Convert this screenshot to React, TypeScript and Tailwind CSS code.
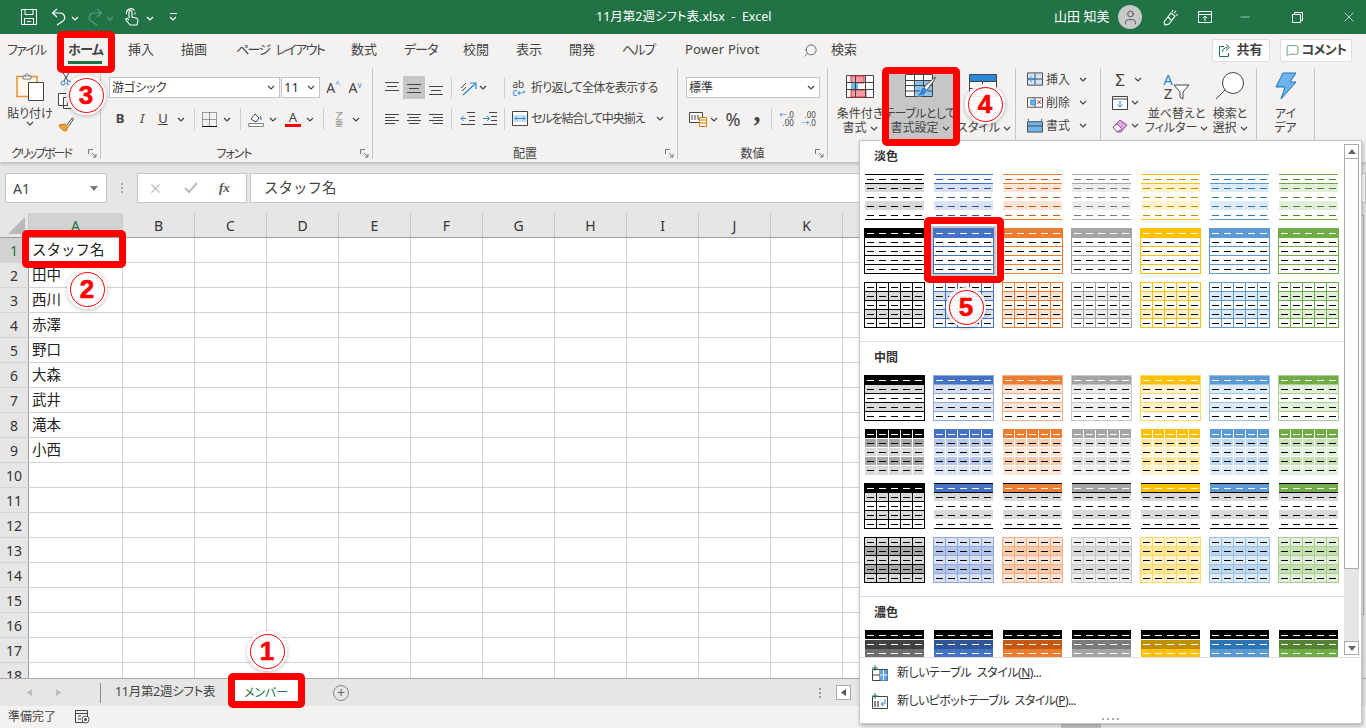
import React from 'react';
import { Search, User, MessageSquare, Minus, X } from 'lucide-react';

const Chev = ({ color = '#444' }: { color?: string }) => (
  <svg width="8" height="5" viewBox="0 0 8 5" className="inline-block shrink-0">
    <path d="M1 1l3 3 3-3" fill="none" stroke={color} strokeWidth="1.2" />
  </svg>
);

const Sep = ({ className }: { className: string }) => <div className={`h-[22px] w-px shrink-0 bg-[#d2d0ce] ${className}`} />;

const Launcher = () => (
  <svg width="9" height="9" viewBox="0 0 9 9" className="absolute right-[3px] bottom-[1px]">
    <path d="M.5 5V.5H5M4 4l4 4M8 5v3H5" fill="none" stroke="#777" strokeWidth="1" />
  </svg>
);

const Group = ({ className, label, launcher, children }: { className: string; label?: React.ReactNode; launcher?: boolean; children: React.ReactNode }) => (
  <div className={`mt-[2px] flex h-[91px] shrink-0 flex-col border-r border-[#c8c6c4] ${className}`}>
    <div className="min-h-0 flex-1">{children}</div>
    <div className="relative flex h-[12px] items-center justify-center pt-[2px] text-[12px] leading-none text-[#444]">
      {label}
      {launcher && <Launcher />}
    </div>
  </div>
);

const Slot = ({ className, children }: { className: string; children?: React.ReactNode }) => (
  <div className={`flex h-full shrink-0 items-center justify-center ${className}`}>{children}</div>
);

const Lines = ({ rows }: { rows: number[][] }) => (
  <svg width="16" height="16" viewBox="0 0 16 16">
    {rows.map(([x1, x2, y]) => (
      <path key={`${x1}${y}`} d={`M${x1} ${y + 0.5}H${x2}`} stroke="#444" />
    ))}
  </svg>
);

const BigBtn = ({ className, icon, l1, l2, chev }: { className: string; icon: React.ReactNode; l1: React.ReactNode; l2: string; chev?: boolean }) => (
  <div className={`flex h-[72px] shrink-0 flex-col items-center pt-[4px] text-[12px] leading-[14px] whitespace-nowrap text-[#444] ${className}`}>
    <div className="flex h-[28px] items-center justify-center">{icon}</div>
    <div className="mt-[7px]">{l1}</div>
    <div className="flex items-center gap-[3px]">
      {l2}
      {chev && <Chev />}
    </div>
  </div>
);

const TitleBar = () => (
  <div className="flex h-[34px] shrink-0 items-center bg-[#217346] text-white">
    <svg width="16" height="16" viewBox="0 0 16 16" className="ml-[21px]">
      <path d="M.5.5h15v15H.5zM4 .5v5h8v-5M3.500 15.500v-6h9v6M6 12.500h4" fill="none" stroke="#fff" />
    </svg>
    <svg width="15" height="18" viewBox="0 0 15 18" className="ml-[14px]">
      <path d="M6 1L1.500 5 6 9M1.500 5H9a4.500 4.500 0 0 1 3 8l-6 4" fill="none" stroke="#fff" strokeWidth="1.2" />
    </svg>
    <div className="ml-[5px]"><Chev color="#fff" /></div>
    <svg width="15" height="18" viewBox="0 0 15 18" className="ml-[9px]">
      <path d="M9 1l4.500 4L9 9M13.500 5H6a4.500 4.500 0 0 0-3 8l6 4" fill="none" stroke="#5f9c7e" strokeWidth="1.2" />
    </svg>
    <div className="ml-[3px]"><Chev color="#5f9c7e" /></div>
    <svg width="15" height="18" viewBox="0 0 15 18" className="ml-[10px]">
      <path d="M5 10V4a1.500 1.500 0 0 1 3 0v5l4 1c1.500.4 2 1 2 2.500L13 17H6l-4-5c-.6-1 .6-2.200 1.800-1.200L5 12M2.500 6a4.500 4.500 0 0 1 8 -3.500M11 6.500a4.500 4.500 0 0 0 0-2" fill="none" stroke="#fff" strokeWidth="1.1" />
    </svg>
    <div className="ml-[7px]"><Chev color="#fff" /></div>
    <div className="ml-[15px] flex flex-col items-center gap-[2px]">
      <div className="h-px w-[7px] bg-white" />
      <Chev color="#fff" />
    </div>
    <div className="ml-[419px] w-[176px] text-[12.500px] whitespace-nowrap">11月第2週シフト表.xlsx &nbsp;-&nbsp; Excel</div>
    <div className="ml-[282px] w-[54px] text-[13px] whitespace-nowrap">山田 知美</div>
    <div className="ml-[10px] flex h-[24px] w-[24px] items-center justify-center rounded-full bg-[#c8c8c8]">
      <User size={17} strokeWidth={1.2} className="text-[#444]" />
    </div>
    <svg width="16" height="17" viewBox="0 0 16 17" className="ml-[21px]">
      <path d="M1 13l7-9 4 3-6 8-4 1zM5 8l3 3M10 1l-1 2M13 2l-2 2M15 6h-2" fill="none" stroke="#fff" strokeWidth="1.1" />
    </svg>
    <svg width="14" height="12" viewBox="0 0 14 12" className="ml-[19px]">
      <path d="M.5.500h13v11H.5zM.5 3.500h13M7 10V5M5 7l2-2 2 2" fill="none" stroke="#fff" />
    </svg>
    <Minus size={14} strokeWidth={1} className="ml-[26px]" />
    <svg width="11" height="11" viewBox="0 0 11 11" className="ml-[40px]">
      <path d="M.5 2.500h8v8h-8zM2.500 2.500v-2h8v8h-2" fill="none" stroke="#fff" />
    </svg>
    <X size={16} strokeWidth={1} className="ml-[38px]" />
  </div>
);

const tabs = [
  ['ファイル', 'w-[38px] tracking-[-1.6px]'],
  ['ホーム', 'ml-[23px] w-[34px] tracking-[-0.6px] font-bold'],
  ['挿入', 'ml-[26px] w-[26px]'],
  ['描画', 'ml-[27px] w-[26px]'],
  ['ページ レイアウト', 'ml-[29px] w-[86px] tracking-[-1.6px] [word-spacing:4px]'],
  ['数式', 'ml-[29px] w-[26px]'],
  ['データ', 'ml-[27px] w-[32px] tracking-[-1px]'],
  ['校閲', 'ml-[27px] w-[26px]'],
  ['表示', 'ml-[27px] w-[26px]'],
  ['開発', 'ml-[27px] w-[26px]'],
  ['ヘルプ', 'ml-[27px] w-[32px] tracking-[-1.5px]'],
];

const TabRow = () => (
  <div className="flex h-[32px] shrink-0 items-center bg-[#f3f2f1] pl-[7px] text-[13px] whitespace-nowrap text-[#444]">
    {tabs.map(([t, cls]) => (
      <div key={t} className={`flex h-[28px] shrink-0 items-center border-b-[3px] pt-[3px] ${t === 'ホーム' ? 'border-[#217346]' : 'border-transparent'} ${cls}`}>
        {t}
      </div>
    ))}
    <div className="ml-[31px] w-[75px] tracking-[0.2px]">Power Pivot</div>
    <Search size={15} strokeWidth={1.2} className="ml-[43px] shrink-0 -scale-x-100" />
    <div className="ml-[13px] w-[26px]">検索</div>
    <div className="ml-[355px] flex h-[23px] w-[58px] shrink-0 items-center justify-center gap-[5px] rounded-[2px] border border-[#e1dfdd] bg-white font-bold">
      <svg width="12" height="13" viewBox="0 0 12 13">
        <path d="M5 2.500H.5v10h9V9M3.500 8c0-3 2-4.500 5-4.500M7 .5l3.500 3L7 6.500" fill="none" stroke="#217346" />
      </svg>
      共有
    </div>
    <div className="ml-[10px] flex h-[23px] w-[72px] shrink-0 items-center justify-center gap-[3px] rounded-[2px] border border-[#e1dfdd] bg-white font-bold tracking-[-0.6px]">
      <MessageSquare size={13} strokeWidth={1.2} className="text-[#217346]" />
      コメント
    </div>
  </div>
);

const Combo = ({ className, text, textClass }: { className: string; text: string; textClass?: string }) => (
  <div className={`flex h-[21px] shrink-0 items-center justify-between border border-[#c6c6c6] bg-white pr-[4px] pl-[2px] text-[#333] ${className} ${textClass ?? ''}`}>
    <span>{text}</span>
    <Chev />
  </div>
);

const ClipboardGroup = () => (
  <Group className="w-[101px]" label={<span className="-ml-[18px] tracking-[-2px]">クリップボード</span>} launcher>
    <div className="flex h-full">
      <BigBtn
        className="w-[58px] pl-[2px]"
        l1="貼り付け"
        l2=""
        chev
        icon={
          <svg width="28" height="29" viewBox="0 0 28 29">
            <path d="M1 4.500h20v20H1z" fill="#fff8ee" stroke="#e8912d" strokeWidth="1.500" />
            <path d="M7 4h8v3H7zM9 4c0-3 4-3 4 0" fill="#fff" stroke="#777" />
            <path d="M12.500 10.500h15v18h-15z" fill="#fff" stroke="#444" />
          </svg>
        }
      />
      <div className="flex flex-col items-center gap-[7px] pt-[2px]">
        <svg width="14" height="16" viewBox="0 0 14 16">
          <path d="M3 1l6 10M11 1L5 11" stroke="#444" fill="none" />
          <circle cx="4" cy="13" r="2" fill="none" stroke="#2b88d8" />
          <circle cx="10" cy="13" r="2" fill="none" stroke="#2b88d8" />
        </svg>
        <svg width="16" height="16" viewBox="0 0 16 16">
          <path d="M.5.500h9v12h-9zM5.500 4.500h9v11h-9z" fill="#fff" stroke="#444" />
        </svg>
        <svg width="16" height="16" viewBox="0 0 16 16">
          <path d="M1 9l6-1 3 3-2 4c-3 0-6-3-7-6z" fill="#f2a33a" stroke="#c9720f" />
          <path d="M9 9l5-7 1.500 1-5 7.500" fill="#fff" stroke="#444" />
        </svg>
      </div>
    </div>
  </Group>
);

const FontGroup = () => (
  <Group className="w-[272px]" label={<span className="-ml-[5px] tracking-[-1px]">フォント</span>} launcher>
    <div className="flex flex-col pt-[9px] pl-[8px]">
      <div className="flex h-[21px] items-center text-[12px]">
        <Combo className="w-[171px]" text="游ゴシック" />
        <Combo className="ml-px w-[39px]" text="11" textClass="text-[13px]" />
        <Slot className="ml-[2px] w-[22px] text-[14px] text-[#444]">A<span className="-mt-[8px] text-[8px] text-[#2b88d8]">^</span></Slot>
        <Slot className="w-[22px] text-[14px] text-[#444]">A<span className="-mt-[6px] text-[8px] text-[#2b88d8]">v</span></Slot>
      </div>
      <div className="mt-[10px] flex h-[22px] items-center text-[#444]">
        <Slot className="w-[22px] text-[13px] font-bold">B</Slot>
        <Slot className="w-[22px] text-[13px] italic">I</Slot>
        <Slot className="w-[20px] text-[13px] underline">U</Slot>
        <Slot className="w-[16px]"><Chev /></Slot>
        <Sep className="ml-[5px]" />
        <Slot className="ml-[3px] w-[22px]">
          <svg width="15" height="15" viewBox="0 0 15 15">
            <path d="M.5.500h14v14H.5zM.5 7.500h14M7.500.500v14" fill="none" stroke="#444" strokeDasharray="1 1" />
            <path d="M0 14.500h15" stroke="#111" />
          </svg>
        </Slot>
        <Slot className="w-[14px]"><Chev /></Slot>
        <Sep className="ml-[6px]" />
        <Slot className="ml-[6px] w-[18px]">
          <svg width="16" height="16" viewBox="0 0 16 16">
            <path d="M3 8l4-5 4 4-3 4z" fill="#fff" stroke="#444" />
            <path d="M12 5c2 1 2 4 1 4s-1-2-1-4z" fill="#2b88d8" />
            <path d="M.5 12.500h15v3H.5z" fill="#fff" stroke="#888" />
          </svg>
        </Slot>
        <Slot className="w-[16px]"><Chev /></Slot>
        <Slot className="w-[24px]">
          <div className="flex flex-col items-center text-[13px] leading-[13px]">
            A
            <div className="h-[3px] w-[16px] bg-[#ff0000]" />
          </div>
        </Slot>
        <Slot className="w-[10px]"><Chev /></Slot>
        <Sep className="ml-[8px]" />
        <Slot className="ml-[6px] w-[18px] text-[8px] leading-[8px] text-[#777]">
          <div className="flex flex-col items-center">ア<span>亜</span></div>
        </Slot>
        <Slot className="w-[16px]"><Chev /></Slot>
      </div>
    </div>
  </Group>
);

const AlignGroup = () => (
  <Group className="w-[305px]" label="配置" launcher>
    <div className="flex flex-col pt-[8px] pl-[8px] text-[12px] whitespace-nowrap text-[#444]">
      <div className="flex h-[23px] items-center">
        <Slot className="w-[22px]"><Lines rows={[[1, 15, 2], [3, 13, 6], [1, 15, 10]]} /></Slot>
        <Slot className="w-[22px] bg-[#c8c6c4]"><Lines rows={[[1, 15, 4], [3, 13, 8], [1, 15, 12]]} /></Slot>
        <Slot className="w-[22px]"><Lines rows={[[1, 15, 6], [3, 13, 10], [1, 15, 14]]} /></Slot>
        <Sep className="ml-[4px]" />
        <Slot className="ml-[6px] w-[20px]">
          <svg width="17" height="16" viewBox="0 0 17 16" className="overflow-visible">
            <path d="M3 15L15 4M10 3h6v6" fill="none" stroke="#2b88d8" strokeWidth="1.200" />
            <path d="M1 8l5-5M2 11l4-4" fill="none" stroke="#444" />
          </svg>
        </Slot>
        <Slot className="w-[10px]"><Chev /></Slot>
        <Sep className="ml-[16px]" />
        <Slot className="ml-[6px] w-[18px]">
          <div className="relative flex w-[15px] flex-col text-[10px] leading-[8px]">
            <span>ab</span>
            <span className="text-[#2b88d8]">c↩</span>
          </div>
        </Slot>
        <div className="ml-[2px] tracking-[-0.75px]">折り返して全体を表示する</div>
      </div>
      <div className="mt-[8px] flex h-[23px] items-center">
        <Slot className="w-[22px]"><Lines rows={[[1, 15, 3], [1, 11, 6], [1, 15, 9], [1, 11, 12]]} /></Slot>
        <Slot className="w-[22px]"><Lines rows={[[1, 15, 3], [3, 13, 6], [1, 15, 9], [3, 13, 12]]} /></Slot>
        <Slot className="w-[22px]"><Lines rows={[[1, 15, 3], [5, 15, 6], [1, 15, 9], [5, 15, 12]]} /></Slot>
        <Sep className="ml-[4px]" />
        <Slot className="ml-[4px] w-[22px]">
          <svg width="15" height="13" viewBox="0 0 15 13">
            <path d="M7 .5h8M9 4.500h6M9 8.500h6M1 12.500h14" stroke="#444" fill="none" />
            <path d="M6 6.500H1M3.500 4l-2.500 2.500L3.500 9" stroke="#2b88d8" fill="none" />
          </svg>
        </Slot>
        <Slot className="w-[22px]">
          <svg width="15" height="13" viewBox="0 0 15 13">
            <path d="M7 .5h8M9 4.500h6M9 8.500h6M1 12.500h14" stroke="#444" fill="none" />
            <path d="M1 6.500h6M5 4l2.500 2.500L5 9" stroke="#2b88d8" fill="none" />
          </svg>
        </Slot>
        <Sep className="ml-[4px]" />
        <Slot className="ml-[6px] w-[18px]">
          <svg width="16" height="15" viewBox="0 0 16 15">
            <path d="M.5.500h15v14H.5z" fill="#fff" stroke="#444" />
            <path d="M1 4h14v7H1z" fill="#cfe4f7" />
            <path d="M3 7.500h10M5 5.500l-2 2 2 2M11 5.500l2 2-2 2" fill="none" stroke="#2b88d8" />
          </svg>
        </Slot>
        <div className="ml-[2px] w-[125px] tracking-[-1.1px]">セルを結合して中央揃え</div>
        <Chev />
      </div>
    </div>
  </Group>
);

const NumberGroup = () => (
  <Group className="w-[150px]" label="数値" launcher>
    <div className="flex flex-col pt-[9px] pl-[8px] text-[#444]">
      <Combo className="w-[134px] text-[12px]" text="標準" />
      <div className="mt-[10px] flex h-[22px] items-center">
        <Slot className="w-[24px]">
          <svg width="18" height="16" viewBox="0 0 18 16">
            <path d="M.5 1.500h13v10H.5z" fill="#fff" stroke="#444" />
            <path d="M3 4v5M6 4v5M9 4v5" stroke="#444" />
            <path d="M10.500 6.500h7v9h-7z" fill="#fff" stroke="#e07b00" />
            <path d="M11 9h6M11 12h6" stroke="#e07b00" />
          </svg>
        </Slot>
        <Slot className="w-[8px]"><Chev /></Slot>
        <Slot className="ml-[5px] w-[20px] text-[18px]">%</Slot>
        <Slot className="w-[28px] pb-[14px] font-['Liberation_Serif',serif] text-[28px] font-bold">,</Slot>
        <Sep />
        <Slot className="ml-[7px] w-[15px] text-[8px] leading-[8px]">
          <div className="flex flex-col items-end">
            <span><span className="text-[#2b88d8]">←</span>.0</span>
            <span>.00</span>
          </div>
        </Slot>
        <Slot className="ml-[7px] w-[15px] text-[8px] leading-[8px]">
          <div className="flex flex-col items-end">
            <span>.00</span>
            <span><span className="text-[#2b88d8]">→</span>.0</span>
          </div>
        </Slot>
      </div>
    </div>
  </Group>
);

const StylesGroup = () => (
  <Group className="w-[188px]">
    <div className="flex pl-[6px]">
      <BigBtn
        className="w-[52px]"
        l1="条件付き"
        l2="書式"
        chev
        icon={
          <svg width="28" height="23" viewBox="0 0 28 23">
            <path d="M.5.500h27v22H.5z" fill="#fff" stroke="#444" />
            <path d="M5 1h13v7H5zM5 15h15v7H5z" fill="#f79ca5" stroke="#d13438" />
            <path d="M5 8h7v7H5z" fill="#6db5ea" />
            <path d="M.5 7.500h27M.5 14.500h27M9.500 1v21M19.500 1v21" fill="none" stroke="#444" />
          </svg>
        }
      />
      <BigBtn
        className="w-[68px] bg-[#c6c6c6]"
        l1={<span className="tracking-[-0.5px]">テーブルとして</span>}
        l2="書式設定"
        chev
        icon={
          <svg width="31" height="25" viewBox="0 0 31 25">
            <path d="M.5.500h27v22H.5z" fill="#fff" stroke="#444" />
            <path d="M9 1h18v5H9z" fill="#fff" />
            <path d="M9 7h18v15H9z" fill="#8cc0ec" />
            <path d="M.5 6.500h27M.5 11.500h27M.5 17h27M9.500 1v21M18.500 1v21" fill="none" stroke="#444" />
            <path d="M30 3L19 13l3 3 8-11z" fill="#fff" stroke="#444" />
            <path d="M19 13c-3 0-3 3-4 5s-3 3-5 3c4 2 9 1 11-2 1-1 1-3 1-3z" fill="#2b88d8" stroke="#fff" strokeWidth="0.5" />
          </svg>
        }
      />
      <BigBtn
        className="w-[60px]"
        l1="セルの"
        l2="スタイル"
        chev
        icon={
          <svg width="31" height="25" viewBox="0 0 31 25">
            <path d="M.5.500h27v22H.5z" fill="#fff" stroke="#444" />
            <path d="M1 1h26v6H1z" fill="#2b88d8" />
            <path d="M.5 7.500h27M.5 14.500h27M13.500 7v15" fill="none" stroke="#444" />
          </svg>
        }
      />
    </div>
  </Group>
);

const cellRows = [
  ['挿入', 'M.5.500h16v13H.5zM.5 7h16M8.500 1v12', '#cfe4f7', 'ins'],
  ['削除', 'M.5 2.500h16v10H.5zM8.500 3v9', '#fff', 'del'],
  ['書式', 'M1.500.500v2M15.500.500v2M.5 3.500h16v11H.5zM.5 8h16', '#6db5ea', 'fmt'],
];

const CellsGroup = () => (
  <Group className="w-[85px]">
    <div className="flex flex-col pl-[11px] text-[12px] text-[#444]">
      {cellRows.map(([t, d, fill, k]) => (
        <div key={k} className="flex h-[23px] items-center">
          <svg width="16" height="15" viewBox="0 0 17 15" className="shrink-0">
            <path d={d} fill={fill} stroke="#444" />
            {k === 'ins' && <path d="M10 7H2M5 4L2 7l3 3" fill="none" stroke="#2b88d8" />}
            {k === 'del' && <path d="M11 5l4 4M15 5l-4 4" fill="none" stroke="#e81123" />}
            {k === 'del' && <path d="M4 5h5v5H4z" fill="#6db5ea" stroke="#2b88d8" />}
          </svg>
          <div className="ml-[3px] w-[33px]">{t}</div>
          <Chev />
        </div>
      ))}
    </div>
  </Group>
);

const EditGroup = () => (
  <Group className="w-[156px]">
    <div className="flex">
      <div className="ml-[11px] flex w-[33px] shrink-0 flex-col">
        <div className="flex h-[23px] items-center gap-[6px]">
          <div className="flex w-[16px] justify-center text-[17px] leading-none text-[#444]">Σ</div>
          <Chev />
        </div>
        <div className="flex h-[23px] items-center gap-[3px]">
          <svg width="16" height="14" viewBox="0 0 16 14" className="shrink-0">
            <path d="M.5.500h15v13H.5zM.5 3h15" fill="#fff" stroke="#444" />
            <path d="M8 5v6M5.500 8.500L8 11l2.500-2.500" fill="none" stroke="#2b88d8" />
          </svg>
          <Chev />
        </div>
        <div className="flex h-[23px] items-center gap-[3px]">
          <svg width="16" height="14" viewBox="0 0 16 14" className="shrink-0">
            <path d="M1 8l7-7 7 5-6 7H5z" fill="#d9a6dd" stroke="#9b4f96" />
            <path d="M5 13l-4-5 4-3 5 5z" fill="#fff" stroke="#9b4f96" />
          </svg>
          <Chev />
        </div>
      </div>
      <BigBtn
        className="w-[63px]"
        l1="並べ替えと"
        l2="フィルター"
        chev
        icon={
          <div className="flex items-end">
            <div className="flex flex-col items-center text-[15px] leading-[14px]">
              <span className="text-[#2b88d8]">A</span>
              <span>Z</span>
            </div>
            <svg width="17" height="16" viewBox="0 0 17 16">
              <path d="M1 1h15l-6 7v7l-3-2V8z" fill="#fff" stroke="#444" />
            </svg>
          </div>
        }
      />
      <BigBtn
        className="w-[44px]"
        l1="検索と"
        l2="選択"
        chev
        icon={
          <svg width="30" height="28" viewBox="0 0 30 28">
            <circle cx="18" cy="11" r="10.500" fill="#fff" stroke="#444" />
            <path d="M10 18L1 27" stroke="#444" />
          </svg>
        }
      />
    </div>
  </Group>
);

const IdeasGroup = () => (
  <Group className="w-[58px]">
    <BigBtn
      className="w-full"
      l1="アイ"
      l2="デア"
      icon={
        <svg width="22" height="28" viewBox="0 0 22 28">
          <path d="M8 1h13l-6 9h6L6 27l4-12H1z" fill="#6db5ea" stroke="#1b6ec2" />
        </svg>
      }
    />
  </Group>
);

const Ribbon = () => (
  <div className="relative z-10 flex h-[96px] shrink-0 items-start bg-[#f3f2f1] shadow-[0_2px_3px_rgba(0,0,0,0.18)]">
    <ClipboardGroup />
    <FontGroup />
    <AlignGroup />
    <NumberGroup />
    <StylesGroup />
    <CellsGroup />
    <EditGroup />
    <IdeasGroup />
  </div>
);

const FormulaBar = () => (
  <div className="flex h-[51px] shrink-0 items-start bg-[#e6e6e6] pt-[11px] pl-[5px]">
    <div className="flex h-[30px] w-[102px] items-center justify-between border border-[#c6c6c6] bg-white pr-[8px] pl-[7px] text-[14px] text-[#444]">
      A1
      <svg width="8" height="5" viewBox="0 0 8 5"><path d="M0 0h8L4 5z" fill="#777" /></svg>
    </div>
    <div className="ml-[14px] flex h-[30px] flex-col items-center justify-center gap-[2px]">
      <div className="h-[2px] w-[2px] bg-[#aaa]" />
      <div className="h-[2px] w-[2px] bg-[#aaa]" />
      <div className="h-[2px] w-[2px] bg-[#aaa]" />
    </div>
    <div className="ml-[14px] flex h-[30px] w-[110px] items-center border border-[#c6c6c6] bg-white">
      <X size={15} strokeWidth={1.8} className="ml-[10px] text-[#bbb]" />
      <svg width="14" height="12" viewBox="0 0 14 12" className="ml-[21px]">
        <path d="M1 6l4 4 8-9" fill="none" stroke="#bbb" strokeWidth="2" />
      </svg>
      <div className="ml-[21px] font-['Liberation_Serif',serif] text-[13px] font-bold text-[#555] italic">fx</div>
    </div>
    <div className="ml-[3px] flex h-[30px] flex-1 items-center border border-[#c6c6c6] bg-white pl-[13px] text-[14.500px] text-[#444] [font-feature-settings:normal]">スタッフ名</div>
  </div>
);

const columns = ['A', 'B', 'C', 'D', 'E', 'F', 'G', 'H', 'I', 'J', 'K', 'L', 'M', 'N', 'O', 'P'];
const names = ['スタッフ名', '田中', '西川', '赤澤', '野口', '大森', '武井', '滝本', '小西'];
const rowNums = Array.from({ length: 18 }, (_, i) => i + 1);

const Sheet = () => (
  <div className="flex min-h-0 flex-1 overflow-hidden">
    <div className="min-w-0 flex-1 overflow-hidden">
      <div className="flex h-[25px] border-b border-[#9e9e9e] bg-[#e6e6e6]">
        <div className="flex w-[29px] shrink-0 items-end justify-end border-r border-[#c8c8c8] pr-[3px] pb-[3px]">
          <svg width="17" height="17" viewBox="0 0 17 17"><path d="M17 0v17H0z" fill="#b9b9b9" /></svg>
        </div>
        {columns.map((c, i) => (
          <div key={c} className={`flex shrink-0 items-center justify-center border-r border-[#c8c8c8] text-[14px] ${i === 0 ? 'w-[94px] bg-[#d2d2d2] text-[#217346]' : 'w-[72px] text-[#333]'}`}>
            {c}
          </div>
        ))}
      </div>
      {rowNums.map((r) => (
        <div key={r} className="flex h-[25px] border-b border-[#d4d4d4]">
          <div className={`flex w-[29px] shrink-0 items-center justify-center border-r border-[#9e9e9e] text-[14px] ${r === 1 ? 'bg-[#d2d2d2] text-[#217346]' : 'bg-[#e6e6e6] text-[#333]'}`}>{r}</div>
          {columns.map((c, i) => (
            <div key={c} className={`flex shrink-0 items-center overflow-hidden border-r border-[#d4d4d4] pl-[3px] text-[14.500px] whitespace-nowrap text-[#222] [font-feature-settings:normal] ${i === 0 ? 'w-[94px]' : 'w-[72px]'}`}>
              {i === 0 ? names[r - 1] : ''}
            </div>
          ))}
        </div>
      ))}
    </div>
    <div className="flex w-[18px] shrink-0 flex-col items-center bg-[#e6e6e6] pt-[2px]">
      <div className="h-[400px] w-[14px] border border-[#ababab] bg-[#f5f5f5]" />
    </div>
  </div>
);

const SheetBar = () => (
  <div className="flex h-[28px] shrink-0 items-center border-t border-[#ababab] bg-[#e6e6e6] text-[13px] text-[#444]">
    <svg width="5" height="7" viewBox="0 0 5 7" className="ml-[27px]"><path d="M5 0v7L0 3.500z" fill="#bbb" /></svg>
    <svg width="5" height="7" viewBox="0 0 5 7" className="ml-[24px]"><path d="M0 0v7l5-3.500z" fill="#bbb" /></svg>
    <div className="ml-[39px] h-[20px] w-px bg-[#8a8a8a]" />
    <div className="ml-[14px] w-[104px] text-[12.500px] tracking-[-0.3px] whitespace-nowrap">11月第2週シフト表</div>
    <div className="ml-[15px] flex h-full w-[64px] items-center justify-center bg-white text-[12px] text-[#217346]">メンバー</div>
    <div className="ml-[35px] flex h-[16px] w-[16px] items-center justify-center rounded-full border border-[#888] text-[14px] leading-none text-[#666]">+</div>
    <div className="ml-[470px] flex flex-col gap-[2px]">
      <div className="h-[2px] w-[2px] bg-[#999]" />
      <div className="h-[2px] w-[2px] bg-[#999]" />
      <div className="h-[2px] w-[2px] bg-[#999]" />
    </div>
    <div className="ml-[15px] flex h-[15px] w-[15px] items-center justify-center border border-[#ababab] bg-white">
      <svg width="5" height="7" viewBox="0 0 5 7"><path d="M5 0v7L0 3.500z" fill="#555" /></svg>
    </div>
  </div>
);

const StatusBar = () => (
  <div className="flex h-[22px] shrink-0 items-center bg-[#f3f2f1] pl-[8px] text-[12px] text-[#444]">
    <div className="w-[48px]">準備完了</div>
    <svg width="15" height="14" viewBox="0 0 15 14" className="ml-[19px]">
      <path d="M.5.500h12v12H.5zM.5 3.500h12M3 6h3M3 9h3" fill="none" stroke="#444" />
      <circle cx="10.500" cy="9.500" r="3.500" fill="#fff" stroke="#444" />
      <circle cx="10.500" cy="9.500" r="1.500" fill="#444" />
    </svg>
    <div className="ml-[971px] h-full w-[40px] bg-[#c8c8c8]" />
  </div>
);

type Row = { bg: string; dash: string; top: string };
type ThumbSpec = { rows: Row[]; v: string; side: string; bottom: string };

const NONE = 'transparent';
const WHITE = '#ffffff';
const BLACK = '#000000';

const themes = [
  { c: '#000000', dash: '#000000', t1: '#d9d9d9', t2: '#a6a6a6', soft: '#000000', d1: '#404040', d2: '#6e6e6e' },
  { c: '#4472c4', dash: '#2f5597', t1: '#d9e1f2', t2: '#b4c6e7', soft: '#8ea9db', d1: '#2f5597', d2: '#4472c4' },
  { c: '#ed7d31', dash: '#c65911', t1: '#fce4d6', t2: '#f8cbad', soft: '#f4b084', d1: '#c65911', d2: '#ed7d31' },
  { c: '#a5a5a5', dash: '#7b7b7b', t1: '#ededed', t2: '#dbdbdb', soft: '#c9c9c9', d1: '#7b7b7b', d2: '#a5a5a5' },
  { c: '#ffc000', dash: '#bf8f00', t1: '#fff2cc', t2: '#ffe699', soft: '#ffd966', d1: '#bf8f00', d2: '#ffc000' },
  { c: '#5b9bd5', dash: '#2e75b6', t1: '#ddebf7', t2: '#bdd7ee', soft: '#9bc2e6', d1: '#2e75b6', d2: '#5b9bd5' },
  { c: '#70ad47', dash: '#548235', t1: '#e2efda', t2: '#c6e0b4', soft: '#a9d08e', d1: '#548235', d2: '#70ad47' },
];
type Theme = (typeof themes)[number];

const band = (a: string, b: string, dash: string, top: string) =>
  [a, b, a, b].map((bg) => ({ bg, dash, top }));

const lightStripe = (t: Theme): ThumbSpec => {
  const rows = band(t.t1, WHITE, t.dash, NONE);
  rows[0].top = t.c;
  return { rows: [{ bg: WHITE, dash: t.dash, top: t.c }, ...rows], v: NONE, side: NONE, bottom: t.c };
};
const lightLines = (t: Theme): ThumbSpec => ({
  rows: [{ bg: t.c, dash: WHITE, top: t.c }, ...band(WHITE, WHITE, BLACK, t.c)],
  v: NONE,
  side: t.c,
  bottom: t.c,
});
const lightGrid = (t: Theme): ThumbSpec => ({
  rows: [{ bg: WHITE, dash: BLACK, top: t.c }, ...band(t.t1, WHITE, BLACK, t.c)],
  v: t.c,
  side: t.c,
  bottom: t.c,
});
const medLines = (t: Theme): ThumbSpec => ({
  rows: [{ bg: t.c, dash: WHITE, top: t.soft }, ...band(t.t1, WHITE, BLACK, t.soft)],
  v: NONE,
  side: t.soft,
  bottom: t.soft,
});
const medGaps = (t: Theme): ThumbSpec => ({
  rows: [{ bg: t.c, dash: WHITE, top: t.c }, ...band(t.t2, t.t1, BLACK, WHITE)],
  v: WHITE,
  side: NONE,
  bottom: t.t1,
});
const medRules = (t: Theme, i: number): ThumbSpec =>
  i === 0
    ? { rows: [{ bg: BLACK, dash: WHITE, top: BLACK }, ...band('#d9d9d9', WHITE, BLACK, BLACK)], v: BLACK, side: BLACK, bottom: BLACK }
    : {
        rows: [
          { bg: t.c, dash: WHITE, top: BLACK },
          { bg: '#d9d9d9', dash: BLACK, top: BLACK },
          { bg: WHITE, dash: BLACK, top: NONE },
          { bg: '#d9d9d9', dash: BLACK, top: NONE },
          { bg: WHITE, dash: BLACK, top: NONE },
        ],
        v: NONE,
        side: NONE,
        bottom: BLACK,
      };
const medGrid = (t: Theme): ThumbSpec => ({
  rows: [{ bg: t.t1, dash: BLACK, top: t.soft }, ...band(t.t2, t.t1, BLACK, t.soft)],
  v: t.soft,
  side: t.soft,
  bottom: t.soft,
});
const darkBands = (t: Theme): ThumbSpec => ({
  rows: [
    { bg: BLACK, dash: WHITE, top: BLACK },
    { bg: t.d1, dash: WHITE, top: WHITE },
    { bg: t.d2, dash: WHITE, top: t.d1 },
    { bg: t.d1, dash: WHITE, top: t.d1 },
    { bg: t.d2, dash: WHITE, top: t.d1 },
  ],
  v: NONE,
  side: NONE,
  bottom: t.d2,
});

const Thumb = ({ spec, selected }: { spec: ThumbSpec; selected?: boolean }) => (
  <div className={selected ? 'outline-[2px] outline-[#c6c6c6]' : ''}>
    <div className="flex h-[46px] w-[61px] flex-col border-x" style={{ borderColor: spec.side }}>
      {spec.rows.map((r, ri) => (
        <div key={ri} className="flex h-[9px] shrink-0 border-t" style={{ backgroundColor: r.bg, borderTopColor: r.top }}>
          {[0, 1, 2, 3, 4].map((c) => (
            <div key={c} className="flex flex-1 items-center justify-center border-l first:border-l-0" style={{ borderLeftColor: spec.v }}>
              <div className="h-px w-[7px]" style={{ backgroundColor: r.dash }} />
            </div>
          ))}
        </div>
      ))}
      <div className="h-px shrink-0" style={{ backgroundColor: spec.bottom }} />
    </div>
  </div>
);

const ThumbRow = ({ make, selectedIndex }: { make: (t: Theme, i: number) => ThumbSpec; selectedIndex?: number }) => (
  <>
    {themes.map((t, i) => (
      <Thumb key={t.c} spec={make(t, i)} selected={i === selectedIndex} />
    ))}
  </>
);

const Heading = ({ text }: { text: string }) => (
  <div className="flex h-[33px] items-center pb-[2px] pl-[14px] text-[12px] font-bold text-[#333]">{text}</div>
);

const TableStyleMenu = () => (
  <div className="absolute top-[140px] left-[859px] z-20 flex h-[584px] w-[503px] flex-col border border-[#c8c6c4] bg-white shadow-[1px_2px_4px_rgba(0,0,0,0.25)]">
    <div className="flex h-[516px] shrink-0">
      <div className="w-[484px] shrink-0 overflow-hidden">
        <Heading text="淡色" />
        <div className="grid grid-cols-[repeat(7,61px)] gap-x-[8px] gap-y-[8px] pl-[4px]">
          <ThumbRow make={lightStripe} />
          <ThumbRow make={lightLines} selectedIndex={1} />
          <ThumbRow make={lightGrid} />
        </div>
        <div className="mt-[13px] border-t border-[#e1dfdd]" />
        <Heading text="中間" />
        <div className="grid grid-cols-[repeat(7,61px)] gap-x-[8px] gap-y-[8px] pl-[4px]">
          <ThumbRow make={medLines} />
          <ThumbRow make={medGaps} />
          <ThumbRow make={medRules} />
          <ThumbRow make={medGrid} />
        </div>
        <div className="mt-[13px] border-t border-[#e1dfdd]" />
        <Heading text="濃色" />
        <div className="grid grid-cols-[repeat(7,61px)] gap-x-[8px] pl-[4px]">
          <ThumbRow make={darkBands} />
        </div>
      </div>
      <div className="flex w-[15px] shrink-0 flex-col pt-[3px]">
        <div className="flex h-[15px] shrink-0 items-center justify-center border border-[#ababab]">
          <svg width="8" height="5" viewBox="0 0 8 5"><path d="M4 0l4 5H0z" fill="#666" /></svg>
        </div>
        <div className="h-[410px] shrink-0 border-x border-b border-[#ababab] bg-white" />
        <div className="flex-1 bg-[#e6e6e6]" />
        <div className="flex h-[14px] shrink-0 items-center justify-center border border-[#ababab]">
          <svg width="8" height="5" viewBox="0 0 8 5"><path d="M0 0h8L4 5z" fill="#666" /></svg>
        </div>
        <div className="h-[2px] shrink-0" />
      </div>
    </div>
    <div className="flex-1 border-t border-[#e1dfdd] text-[12px] whitespace-nowrap text-[#333]">
      <div className="flex h-[29px] items-center pl-[12px]">
        <svg width="16" height="16" viewBox="0 0 16 16">
          <path d="M.5 4.500h15v11H.5zM8 4.500v11M.5 10h15" fill="#fff" stroke="#444" />
          <path d="M8 5h7.500v10.500H8z" fill="#5ba4e6" />
          <path d="M8 10h7.500M11.500 5v10.500" stroke="#fff" />
          <path d="M3 0v6M0 3h6" stroke="#217346" />
        </svg>
        <span className="ml-[9px] tracking-[-0.45px] [word-spacing:3px]">新しいテーブル スタイル(<span className="underline">N</span>)...</span>
      </div>
      <div className="flex h-[28px] items-center pl-[12px]">
        <svg width="16" height="16" viewBox="0 0 16 16">
          <path d="M.5 3.500h15v12H.5z" fill="#fff" stroke="#444" />
          <path d="M3 8v6M6 8v6" stroke="#888" strokeWidth="2" />
          <path d="M3 0v6M0 3h6" stroke="#217346" />
          <path d="M13 6v5H9M11 9l-2 2 2 2" fill="none" stroke="#2b88d8" />
        </svg>
        <span className="ml-[9px] tracking-[-0.6px] [word-spacing:3px]">新しいピボットテーブル スタイル(<span className="underline">P</span>)...</span>
      </div>
      <div className="flex justify-center gap-[3px] pt-[3px]">
        {[0, 1, 2, 3].map((d) => (
          <div key={d} className="h-[2px] w-[2px] bg-[#a0aec0]" />
        ))}
      </div>
    </div>
  </div>
);

const Mark = ({ className }: { className: string }) => (
  <div className={`pointer-events-none absolute z-30 rounded-[5px] border-[7px] border-[#ff0000] ${className}`} />
);

const Badge = ({ n, className }: { n: number; className: string }) => (
  <div className={`absolute z-30 flex h-[40px] w-[40px] items-center justify-center rounded-full bg-white/90 shadow-[0_1px_4px_rgba(0,0,0,0.25)] ${className}`}>
    <div className="flex h-[35px] w-[35px] items-center justify-center rounded-full border border-[#ff0000] font-['Liberation_Sans',sans-serif] text-[26px] leading-none font-bold text-[#ff0000] [-webkit-text-stroke:0.6px_#ff0000]">
      {n}
    </div>
  </div>
);

export default function App() {
  return (
    <div className="relative flex h-[728px] w-[1366px] flex-col overflow-hidden bg-white font-['Noto_Sans','Noto_Sans_CJK_JP',sans-serif] [font-feature-settings:'palt']">
      <TitleBar />
      <TabRow />
      <Ribbon />
      <FormulaBar />
      <Sheet />
      <SheetBar />
      <StatusBar />
      <TableStyleMenu />
      <Mark className="top-[31px] left-[57px] h-[42px] w-[58px]" />
      <Mark className="top-[67px] left-[882px] h-[79px] w-[78px]" />
      <Mark className="top-[230px] left-[22px] h-[38px] w-[104px]" />
      <Mark className="top-[673px] left-[228px] h-[35px] w-[77px]" />
      <Mark className="top-[217px] left-[924px] h-[66px] w-[80px]" />
      <Badge n={1} className="top-[631px] left-[247px]" />
      <Badge n={2} className="top-[269px] left-[67px]" />
      <Badge n={3} className="top-[75px] left-[66px]" />
      <Badge n={4} className="top-[84px] left-[965px]" />
      <Badge n={5} className="top-[287px] left-[946px]" />
    </div>
  );
}
